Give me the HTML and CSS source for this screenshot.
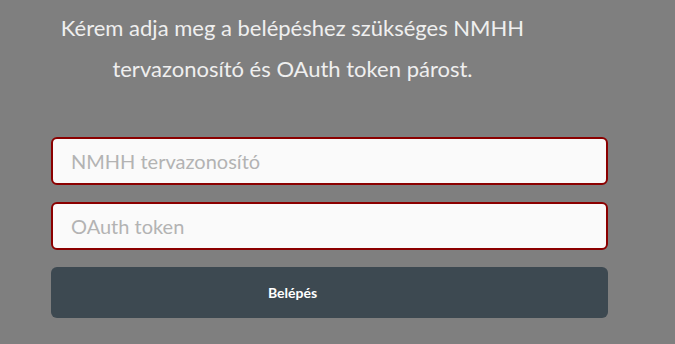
FILE: index.html
```html
<!DOCTYPE html>
<html lang="hu">
<head>
<meta charset="utf-8">
<link rel="stylesheet" href="styles.css">
</head>
<body>
<main class="login">
  <h4 class="login-title">Kérem adja meg a belépéshez szükséges NMHH tervazonosító és OAuth token párost.</h4>
  <form class="login-form">
    <input class="login-input" type="text" placeholder="NMHH tervazonosító">
    <input class="login-input" type="text" placeholder="OAuth token">
    <button class="login-button" type="button"><span>Belépés</span></button>
  </form>
</main>
</body>
</html>
```
FILE: styles.css
```css
html, body {
  margin: 0;
  padding: 0;
  background: #7f7f7f;
  font-family: Lato, "Open Sans", sans-serif;
}
.login {
  width: 557px;
  margin-left: 51px;
  padding-top: 7px;
}
.login-title {
  margin: 0;
  padding-right: 74px;
  font-size: 22px;
  line-height: 41px;
  font-weight: 400;
  color: #efefef;
  text-align: center;
}
.login-form {
  display: flex;
  flex-direction: column;
  gap: 17px;
  margin-top: 48px;
}
.login-input {
  box-sizing: border-box;
  height: 48px;
  width: 100%;
  margin: 0;
  padding: 0 18px;
  border: 2px solid #8b0000;
  border-radius: 6px;
  background: #fafafa;
  font-family: Lato, "Open Sans", sans-serif;
  font-size: 20px;
  color: #333;
  outline: none;
}
.login-input::placeholder {
  color: #b3b3b3;
}
.login-button {
  box-sizing: border-box;
  height: 51px;
  width: 100%;
  margin: 0;
  padding: 0 74px 0 0;
  border: none;
  border-radius: 6px;
  background: #3d4951;
  color: #ffffff;
  font-family: Lato, "Open Sans", sans-serif;
  font-size: 14px;
  font-weight: 700;
}
```
